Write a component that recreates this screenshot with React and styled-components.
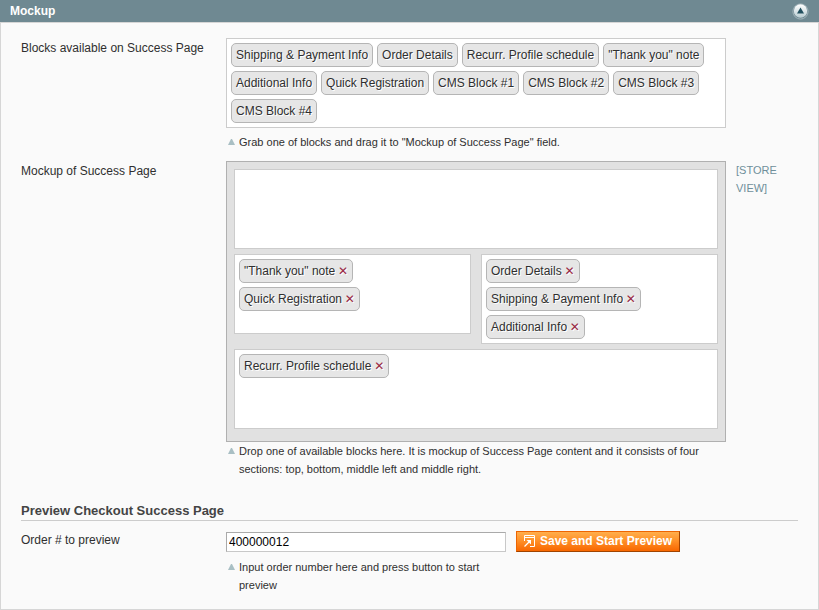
import React from "react";
import styled, { createGlobalStyle } from "styled-components";

const GlobalStyle = createGlobalStyle`
  *, *::before, *::after { box-sizing: border-box; }
  body {
    margin: 0;
    background: #fff;
    color: #2f2f2f;
    font: 12px/18px "Liberation Sans", Arial, sans-serif;
  }
`;

const Page = styled.main`
  width: 819px;
  height: 610px;
  display: flex;
  flex-direction: column;
`;

const Header = styled.header`
  flex: none;
  height: 22px;
  padding: 0 10px;
  display: flex;
  align-items: center;
  justify-content: space-between;
  background: #6f8992;
`;

const Title = styled.h1`
  margin: 0;
  color: #fff;
  font-size: 12px;
  line-height: 22px;
`;

const CollapseIcon = styled.svg`
  display: block;
  width: 17px;
  height: 17px;
  margin-top: 1px;
`;

const Panel = styled.section`
  flex: 1;
  padding: 15px 20px 0;
  border: 1px solid #d6d6d6;
  background: #fafafa;
`;

const Row = styled.div`
  display: grid;
  grid-template-columns: 205px ${(p) => p.$field || 500}px 1fr;
  margin-top: ${(p) => p.$top || 0}px;
`;

const Label = styled.label`
  padding-top: ${(p) => p.$top ?? 1}px;
`;

const Scope = styled.span`
  width: 62px;
  padding-left: 10px;
  font-size: 11px;
  color: #6f8f9b;
`;

const ChipBox = styled.div`
  display: flex;
  flex-wrap: wrap;
  align-content: flex-start;
  align-items: flex-start;
  flex-direction: ${(p) => (p.$stack ? "column" : "row")};
  gap: 4px;
  padding: 4px;
  min-height: 80px;
  border: 1px solid #ccc;
  background: #fff;
`;

const Chip = styled.span`
  height: 24px;
  padding: 2px 4px;
  border: 1px solid #b5b5b5;
  border-radius: 5px;
  background: #e6e6e6;
  text-shadow: 1px 1px 0 #fff;
  white-space: nowrap;
`;

const Remove = styled.span`
  margin-left: -0.6px;
  color: #992743;
  font-family: "DejaVu Sans", sans-serif;
  line-height: 1;
`;

const Mockup = styled.div`
  display: grid;
  grid-template-columns: 1fr 1fr;
  align-items: start;
  gap: 5px 10px;
  padding: 7px 7px 12px;
  border: 1px solid #b0b0b0;
  background: #e1e1e1;
`;

const WideSlot = styled(ChipBox)`
  grid-column: 1 / -1;
`;

const Note = styled.p`
  display: flex;
  margin: ${(p) => p.$top || 0}px 0 0;
  font-size: 11px;
`;

const NoteMark = styled.svg`
  flex: none;
  width: 7px;
  height: 6px;
  margin: 6px 4px 0 2px;
`;

const Heading = styled.h2`
  margin: 23px 0 0;
  border-bottom: 1px solid #ccc;
  color: #444;
  font-size: 13px;
  line-height: 19px;
`;

const OrderInput = styled.input`
  display: block;
  width: 280px;
  height: 20px;
  margin-top: 1px;
  padding: 0 2px;
  border: 1px solid;
  border-color: #aaa #c8c8c8 #c8c8c8 #aaa;
  border-radius: 0;
  background: #fff;
  color: #000;
  font: 12px "Liberation Sans", Arial, sans-serif;
  outline: none;
`;

const PreviewButton = styled.button`
  display: flex;
  align-items: flex-start;
  width: 164px;
  height: 21px;
  margin-left: 10px;
  padding: 0 7px;
  border: 1px solid;
  border-color: #ed6502 #a04300 #a04300 #ed6502;
  background: linear-gradient(#ffae4c, #ff9129 45%, #f86700);
  color: #fff;
  font: bold 12px/18px "Liberation Sans", Arial, sans-serif;
  white-space: nowrap;
`;

const WindowIcon = styled.svg`
  flex: none;
  width: 11px;
  height: 12px;
  margin: 3px 5px 0 0;
`;

const AVAILABLE = [
  "Shipping & Payment Info",
  "Order Details",
  "Recurr. Profile schedule",
  '"Thank you" note',
  "Additional Info",
  "Quick Registration",
  "CMS Block #1",
  "CMS Block #2",
  "CMS Block #3",
  "CMS Block #4",
];

const LEFT = ['"Thank you" note', "Quick Registration"];
const RIGHT = ["Order Details", "Shipping & Payment Info", "Additional Info"];
const BOTTOM = ["Recurr. Profile schedule"];

function PlacedChip({ children }) {
  return (
    <Chip>
      {children} <Remove>✕</Remove>
    </Chip>
  );
}

function Hint({ top, children }) {
  return (
    <Note $top={top}>
      <NoteMark viewBox="0 0 7 6">
        <path d="M3 0h1L7 6H0z" fill="#a9bfc4" />
      </NoteMark>
      <span>{children}</span>
    </Note>
  );
}

export default function App() {
  return (
    <Page>
      <GlobalStyle />
      <Header>
        <Title>Mockup</Title>
        <CollapseIcon viewBox="0 0 17 17">
          <defs>
            <linearGradient id="knob" x2="0" y2="1">
              <stop offset="0" stopColor="#fff" />
              <stop offset="1" stopColor="#b9cdd2" />
            </linearGradient>
          </defs>
          <circle cx="8.5" cy="8.5" r="7.6" fill="#6f8992" stroke="#a1b4ba" />
          <circle cx="8.5" cy="8" r="6.7" fill="url(#knob)" />
          <path d="M8.5 4.5L12 10.5H5z" fill="#22505f" />
        </CollapseIcon>
      </Header>
      <Panel>
        <Row>
          <Label>Blocks available on Success Page</Label>
          <div>
            <ChipBox>
              {AVAILABLE.map((name) => (
                <Chip key={name}>{name}</Chip>
              ))}
            </ChipBox>
            <Hint top={5}>
              Grab one of blocks and drag it to "Mockup of Success Page" field.
            </Hint>
          </div>
        </Row>
        <Row $top={10}>
          <Label>Mockup of Success Page</Label>
          <div>
            <Mockup>
              <WideSlot />
              <ChipBox $stack>
                {LEFT.map((name) => (
                  <PlacedChip key={name}>{name}</PlacedChip>
                ))}
              </ChipBox>
              <ChipBox $stack>
                {RIGHT.map((name) => (
                  <PlacedChip key={name}>{name}</PlacedChip>
                ))}
              </ChipBox>
              <WideSlot>
                {BOTTOM.map((name) => (
                  <PlacedChip key={name}>{name}</PlacedChip>
                ))}
              </WideSlot>
            </Mockup>
            <Hint>
              Drop one of available blocks here. It is mockup of Success Page
              content and it consists of four sections: top, bottom, middle left
              and middle right.
            </Hint>
          </div>
          <Scope>[STORE VIEW]</Scope>
        </Row>
        <Heading>Preview Checkout Success Page</Heading>
        <Row $top={10} $field={280}>
          <Label htmlFor="order" $top={0}>Order # to preview</Label>
          <div>
            <OrderInput id="order" defaultValue="400000012" />
            <Hint top={6}>
              Input order number here and press button to start preview
            </Hint>
          </div>
          <PreviewButton type="button">
            <WindowIcon viewBox="0 0 11 12" fill="none" stroke="#fff">
              <path d="M.5 6V.5h10v11H6M0 2.5h11" />
              <path d="M.5 11.5L5 7" strokeWidth="1.3" />
              <path d="M2.5 5H7v4.5z" fill="#fff" stroke="none" />
            </WindowIcon>
            Save and Start Preview
          </PreviewButton>
        </Row>
      </Panel>
    </Page>
  );
}
